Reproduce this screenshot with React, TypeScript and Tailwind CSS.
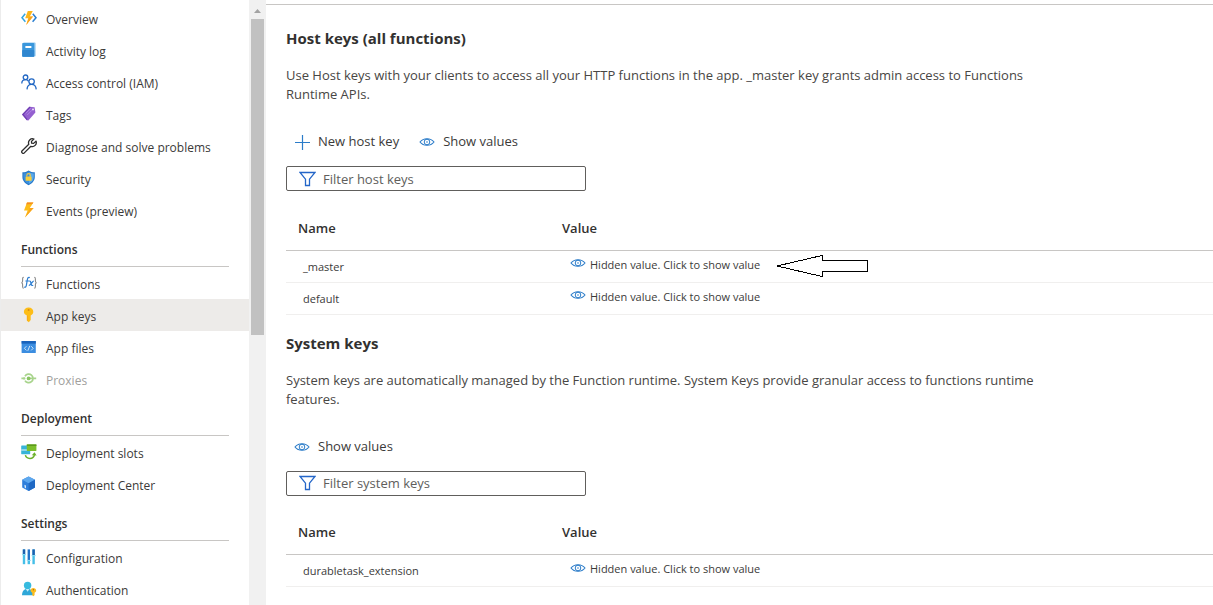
import type { ReactNode } from "react";

type NavItem = { label: string; icon: ReactNode; active?: boolean; muted?: boolean };
type NavGroup = { title?: string; items: NavItem[] };
type KeyGroup = {
  id: string;
  title: string;
  description: string;
  canAdd: boolean;
  placeholder: string;
  keys: { name: string; marked?: boolean }[];
};

function Icon({ children }: { children: ReactNode }) {
  return (
    <svg viewBox="0 0 16 16" className="size-4 shrink-0" aria-hidden="true">
      {children}
    </svg>
  );
}

const overviewIcon = (
  <Icon>
    <path d="M4.2 3.8L1 7.8L4.4 11.8" fill="none" stroke="#32a5e0" strokeWidth="1.5" />
    <path d="M11.8 3.8L15 7.8L11.6 11.8" fill="none" stroke="#2b7fd0" strokeWidth="1.5" />
    <path d="M9.6 1H6.8L4.2 8.2H7.2L5.2 15L12 6.4H8.8L11.8 1Z" fill="#fcb51a" />
    <path d="M8 8L5.2 15L12 6.4H9.4Z" fill="#f9a01c" />
  </Icon>
);

const logIcon = (
  <Icon>
    <rect x="2" y="0.6" width="12.6" height="14" rx="1" fill="#8fc6ee" />
    <rect x="1.2" y="1" width="12" height="13.8" rx="0.8" fill="#3a97dc" />
    <rect x="1.2" y="8" width="12" height="6.8" rx="0.8" fill="#2f86cf" />
    <rect x="4.4" y="4" width="6" height="2" fill="#ffffff" />
  </Icon>
);

const accessIcon = (
  <Icon>
    <g fill="none" stroke="#2368c4" strokeWidth="1.3">
      <circle cx="4.5" cy="3.3" r="2.3" />
      <path d="M0.8 9.6C0.8 7 2.3 5.7 4.5 5.7C6 5.7 7 6.4 7.6 7.3" />
      <circle cx="10.6" cy="7.6" r="2.7" />
      <path d="M6 15.4C6.2 12 8 10.4 10.6 10.4C13.2 10.4 15 12 15.2 15.4" />
    </g>
  </Icon>
);

const tagIcon = (
  <Icon>
    <path d="M8.4 0.8L13.6 1.2L14.4 6.6L7.4 14.6L5.8 14.2L1 8.4Z" fill="#9460d0" />
    <path d="M8.4 0.8L1 8.4L5.8 14.2L6.6 13.2L2.8 8.6L9.8 1Z" fill="#6f3fb2" />
    <path d="M4.6 7.2L9.8 2.4M6.2 9L11 4.2" stroke="#b58be4" strokeWidth="0.8" />
    <circle cx="12" cy="3.4" r="0.9" fill="#f4ecfc" />
  </Icon>
);

const wrenchIcon = (
  <Icon>
    <path
      d="M12.9 1A4 4 0 0 0 7.8 6.2L1.2 12.7A1.4 1.4 0 0 0 3.3 14.9L9.9 8.3A4 4 0 0 0 15 3.1L12.6 5.4L10.6 5.2L10.5 3.4Z"
      fill="none"
      stroke="#2c2c2c"
      strokeWidth="1.3"
      strokeLinejoin="round"
    />
  </Icon>
);

const securityIcon = (
  <Icon>
    <path d="M7.6 0.4C9.4 1.8 11.4 2.2 13.8 2.3V7C13.8 10.8 11 13.6 7.6 15.2C4.2 13.6 1.4 10.8 1.4 7V2.3C3.8 2.2 5.8 1.8 7.6 0.4Z" fill="#2577c9" />
    <path d="M7.6 1.8C9.2 2.9 10.8 3.2 12.8 3.4V7C12.8 10.2 10.4 12.6 7.6 14Z" fill="#5aa9ea" />
    <path d="M7.6 1.8C6 2.9 4.4 3.2 2.4 3.4V7C2.4 10.2 4.8 12.6 7.6 14Z" fill="#3d90dc" />
    <path d="M5.8 6.6V5.4A1.8 1.8 0 0 1 9.4 5.4V6.6" fill="none" stroke="#f2c744" strokeWidth="1.1" />
    <rect x="4.6" y="6.4" width="6" height="4.4" rx="0.5" fill="#f8cf3c" />
  </Icon>
);

const eventsIcon = (
  <Icon>
    <path d="M6 0.4H12.4L8.8 6H12.6L4 15.4L6.6 8.6H3Z" fill="#fdbd18" />
    <path d="M6 0.4H12.4L11.6 1.8L5.2 2.6Z" fill="#f58a23" />
    <path d="M8.8 6H12.6L4 15.4L8.4 8Z" fill="#f9a21d" />
  </Icon>
);

const functionsIcon = (
  <Icon>
    <g fill="none" stroke="#8a8a8a" strokeWidth="1.1">
      <path d="M2.8 2.2C1.7 2.2 1.6 2.8 1.6 4V6C1.6 7 1.3 7.5 0.5 7.7C1.3 7.9 1.6 8.4 1.6 9.4V11.4C1.6 12.6 1.7 13.2 2.8 13.2" />
      <path d="M13.2 2.2C14.3 2.2 14.4 2.8 14.4 4V6C14.4 7 14.7 7.5 15.5 7.7C14.7 7.9 14.4 8.4 14.4 9.4V11.4C14.4 12.6 14.3 13.2 13.2 13.2" />
    </g>
    <g fill="none" stroke="#2e7fd2" strokeWidth="1.2">
      <path d="M8.8 2.6C7.2 1.8 6.6 3 6.3 4.8L5.4 10.2C5.1 12 4.4 12.6 3.2 12M4.4 6H8" />
      <path d="M8.2 6.2C9.4 5.6 9.6 6.6 10 8.4C10.4 10.2 10.8 11 12.2 10.2M12.8 6.2C11.4 6 9.6 10.6 7.8 10.5" />
    </g>
  </Icon>
);

const keyIcon = (
  <Icon>
    <path d="M7.6 0.6C10.4 0.6 12.3 2.3 12.3 4.7C12.3 6.5 11.3 7.7 9.7 8.5V13L7.8 15.2L5.9 13.4V8.5C4 7.7 2.9 6.5 2.9 4.7C2.9 2.3 4.8 0.6 7.6 0.6Z" fill="#fdbd17" />
    <path d="M5.9 8.5H7.1V14.5L5.9 13.4Z" fill="#f9ab1a" />
    <circle cx="7.6" cy="2.9" r="1" fill="#d98c14" />
  </Icon>
);

const filesIcon = (
  <Icon>
    <rect x="0.6" y="2" width="14.2" height="12" rx="0.6" fill="#3b8de0" />
    <rect x="0.6" y="2" width="14.2" height="2.6" fill="#1a63bb" />
    <path d="M5.4 7.2L3.4 9.3L5.4 11.4M10.2 7.2L12.2 9.3L10.2 11.4M8.8 6.8L6.8 11.8" fill="none" stroke="#d9ecfb" strokeWidth="0.9" />
  </Icon>
);

const proxiesIcon = (
  <Icon>
    <path d="M0.4 7.4H3.6M9 7.4H15.2" stroke="#a8d48c" strokeWidth="1.8" />
    <path d="M4 5.2A4.3 4.3 0 1 1 4 9.6" fill="none" stroke="#a8d48c" strokeWidth="1.7" />
    <circle cx="7.6" cy="7.4" r="1.9" fill="#8ac564" />
    <circle cx="3.2" cy="7.4" r="1.2" fill="#a8d48c" />
  </Icon>
);

const slotsIcon = (
  <Icon>
    <rect x="0.2" y="1.6" width="9" height="8.6" rx="0.4" fill="#37b4d8" />
    <rect x="0.2" y="5.4" width="9" height="1.2" fill="#c9edf6" />
    <rect x="5.8" y="0.4" width="9.6" height="6.6" rx="0.4" fill="#7cbf2c" />
    <rect x="5.8" y="0.4" width="9.6" height="1.6" fill="#5c9a1c" />
    <path d="M4.4 11.2C5.4 15.4 12.6 15.8 13.4 10.6" fill="none" stroke="#6db12c" strokeWidth="1.5" />
    <path d="M10.8 11.2L13.5 8.2L15.6 11.4Z" fill="#6db12c" />
  </Icon>
);

const centerIcon = (
  <Icon>
    <path d="M7.6 0.6L14 3.8V11.6L7.6 15L1.2 11.6V3.8Z" fill="#2f7fdb" />
    <path d="M7.6 0.6L14 3.8L7.6 7.2L1.2 3.8Z" fill="#5ea8ee" />
    <path d="M14 3.8L7.6 7.2V15L14 11.6Z" fill="#2069c4" />
    <path d="M3.4 8.8L5 9.6V12.4L3.6 11.6Z" fill="#d6eafc" />
  </Icon>
);

const configIcon = (
  <Icon>
    <rect x="1.8" y="0.4" width="2.4" height="14.8" fill="#45bfe8" />
    <rect x="1.8" y="0.4" width="2.4" height="5" fill="#1d5fae" />
    <rect x="6.6" y="0.4" width="2.4" height="11" fill="#2273c8" />
    <rect x="6.6" y="11.6" width="2.4" height="3.6" fill="#45bfe8" />
    <rect x="11.4" y="0.4" width="2.4" height="14.8" fill="#45bfe8" />
    <rect x="11.4" y="0.4" width="2.4" height="6" fill="#1d5fae" />
    <path d="M1 5.6H5M5.8 11.4H9.8M10.6 6.6H14.6" stroke="#8adcf4" strokeWidth="1" />
  </Icon>
);

const authIcon = (
  <Icon>
    <path d="M1 14.2C1.2 10 3 7.8 6.6 7.8C10.2 7.8 12 10 12.2 14.2Z" fill="#2fa7d8" />
    <path d="M4.6 7.8L6.6 10.8L8.6 7.8Z" fill="#c4ecf8" />
    <circle cx="6.6" cy="4.4" r="3.7" fill="#37bbdf" />
    <path d="M12.2 7C13.9 7 15.2 8 15.2 9.6C15.2 10.6 14.6 11.3 13.6 11.7V14L12.5 15.3L11.3 14.2V11.7C10.2 11.3 9.6 10.6 9.6 9.6C9.6 8 10.6 7 12.2 7Z" fill="#fbbc1e" />
    <circle cx="12.4" cy="8.8" r="0.7" fill="#b96a0c" />
  </Icon>
);

const navGroups: NavGroup[] = [
  {
    items: [
      { label: "Overview", icon: overviewIcon },
      { label: "Activity log", icon: logIcon },
      { label: "Access control (IAM)", icon: accessIcon },
      { label: "Tags", icon: tagIcon },
      { label: "Diagnose and solve problems", icon: wrenchIcon },
      { label: "Security", icon: securityIcon },
      { label: "Events (preview)", icon: eventsIcon },
    ],
  },
  {
    title: "Functions",
    items: [
      { label: "Functions", icon: functionsIcon },
      { label: "App keys", icon: keyIcon, active: true },
      { label: "App files", icon: filesIcon },
      { label: "Proxies", icon: proxiesIcon, muted: true },
    ],
  },
  {
    title: "Deployment",
    items: [
      { label: "Deployment slots", icon: slotsIcon },
      { label: "Deployment Center", icon: centerIcon },
    ],
  },
  {
    title: "Settings",
    items: [
      { label: "Configuration", icon: configIcon },
      { label: "Authentication", icon: authIcon },
    ],
  },
];

const keyGroups: KeyGroup[] = [
  {
    id: "host",
    title: "Host keys (all functions)",
    description:
      "Use Host keys with your clients to access all your HTTP functions in the app. _master key grants admin access to Functions Runtime APIs.",
    canAdd: true,
    placeholder: "Filter host keys",
    keys: [{ name: "_master", marked: true }, { name: "default" }],
  },
  {
    id: "system",
    title: "System keys",
    description:
      "System keys are automatically managed by the Function runtime. System Keys provide granular access to functions runtime features.",
    canAdd: false,
    placeholder: "Filter system keys",
    keys: [{ name: "durabletask_extension" }],
  },
];

function EyeIcon() {
  return (
    <svg viewBox="0 0 16 10" className="h-[10px] w-4 shrink-0" fill="none" stroke="#2b7cc9" aria-hidden="true">
      <path d="M1 5C4.4 0.6 11.6 0.6 15 5C11.6 9.4 4.4 9.4 1 5Z" strokeWidth="1.1" />
      <circle cx="8" cy="5" r="2.8" strokeWidth="1" />
      <circle cx="8" cy="5" r="0.8" fill="#2b7cc9" stroke="none" />
    </svg>
  );
}

function PlusIcon() {
  return (
    <svg viewBox="0 0 16 16" className="size-4 shrink-0" aria-hidden="true">
      <path d="M8.5 1V16M1 8.5H16" stroke="#2b7cc9" strokeWidth="1.2" />
    </svg>
  );
}

function FilterIcon() {
  return (
    <svg viewBox="0 0 17 16" className="h-4 w-[17px] shrink-0" aria-hidden="true">
      <path d="M1 1.5H16L10.5 8.2V14.5H6.5V8.2Z" fill="none" stroke="#2466c8" strokeWidth="1.3" />
    </svg>
  );
}

function PointerArrow() {
  return (
    <svg viewBox="0 0 92 24" className="h-6 w-[92px] shrink-0" aria-hidden="true">
      <path d="M1 12L46 1.5V6.5H91V17.5H46V22.5Z" fill="none" stroke="#000000" strokeWidth="1" shapeRendering="crispEdges" />
    </svg>
  );
}

function Sidebar() {
  return (
    <nav className="w-[249px] shrink-0 border-l border-[#ececec] pt-[2px]" aria-label="Function app">
      {navGroups.map((group, index) => (
        <section key={index}>
          {group.title && (
            <h2 className="mr-5 ml-5 flex h-[41px] items-end border-b border-[#c8c6c4] pb-[6px] text-[12px] leading-5 font-semibold text-[#323130]">
              {group.title}
            </h2>
          )}
          <ul>
            {group.items.map((item) => (
              <li key={item.label}>
                <a
                  href="#"
                  aria-current={item.active ? "page" : undefined}
                  className={`flex h-8 items-center gap-[9px] pl-5 text-[12px] whitespace-nowrap ${
                    item.active ? "bg-[#edebe9]" : ""
                  } ${item.muted ? "text-[#a19f9d]" : "text-[#3b3a39]"}`}
                >
                  {item.icon}
                  <span className="pt-[3px]">{item.label}</span>
                </a>
              </li>
            ))}
          </ul>
        </section>
      ))}
    </nav>
  );
}

function ScrollTrack() {
  return (
    <div className="flex w-[17px] shrink-0 flex-col items-center bg-[#f1f1f1]" aria-hidden="true">
      <svg viewBox="0 0 17 19" className="h-[19px] w-[17px] shrink-0">
        <path d="M5 13L8.5 9L12 13Z" fill="#a3a3a3" />
      </svg>
      <div className="h-[316px] w-[13px] bg-[#c1c1c1]" />
    </div>
  );
}

function KeySection({ group }: { group: KeyGroup }) {
  return (
    <section className="pl-5">
      <h2 className="text-[15px] leading-5 font-bold text-[#323130]">{group.title}</h2>
      <p className="mt-[18px] max-w-[784px] text-[13px] leading-[19px] text-[#484644]">{group.description}</p>
      <div className="mt-[22px] flex h-8 items-center gap-5 pl-2 text-[13px] text-[#3b3a39]">
        {group.canAdd && (
          <button type="button" className="flex items-center gap-2">
            <PlusIcon />
            New host key
          </button>
        )}
        <button type="button" className="flex items-center gap-2">
          <EyeIcon />
          Show values
        </button>
      </div>
      <label className="mt-2 flex h-[25px] w-[300px] items-center gap-[7px] rounded-[2px] border border-[#605e5c] pl-3">
        <FilterIcon />
        <input
          type="text"
          aria-label={group.placeholder}
          placeholder={group.placeholder}
          className="min-w-0 flex-1 bg-transparent text-[13px] leading-5 outline-none placeholder:text-[#605e5c]"
        />
      </label>
      <table className="mt-4 w-full table-fixed border-collapse text-left">
        <thead>
          <tr className="h-[43px] border-b border-[#c8c6c4] text-[13px] text-[#323130]">
            <th scope="col" className="w-[264px] py-0 pl-3 font-semibold">
              Name
            </th>
            <th scope="col" className="py-0 pl-3 font-semibold">
              Value
            </th>
          </tr>
        </thead>
        <tbody>
          {group.keys.map((item) => (
            <tr key={item.name} className="h-8 border-b border-[#f0efee] text-[11px] text-[#3b3a39]">
              <td className="p-0 pt-[2px] pl-[17px]">{item.name}</td>
              <td className="p-0 pl-5">
                <div className="flex h-[30px] items-center gap-4">
                  <button type="button" className="flex items-center gap-1 pb-[2px] whitespace-nowrap">
                    <span className="pb-1">
                      <EyeIcon />
                    </span>
                    Hidden value. Click to show value
                  </button>
                  {item.marked && <PointerArrow />}
                </div>
              </td>
            </tr>
          ))}
        </tbody>
      </table>
    </section>
  );
}

export default function App() {
  return (
    <div className="flex h-screen overflow-hidden bg-white font-['Open_Sans','Noto_Sans',sans-serif]">
      <Sidebar />
      <ScrollTrack />
      <main className="flex min-w-0 flex-1 flex-col pt-1">
        <div className="flex flex-col gap-[18px] border-t border-[#c8c6c4] pt-[23px]">
          {keyGroups.map((group) => (
            <KeySection key={group.id} group={group} />
          ))}
        </div>
      </main>
    </div>
  );
}
